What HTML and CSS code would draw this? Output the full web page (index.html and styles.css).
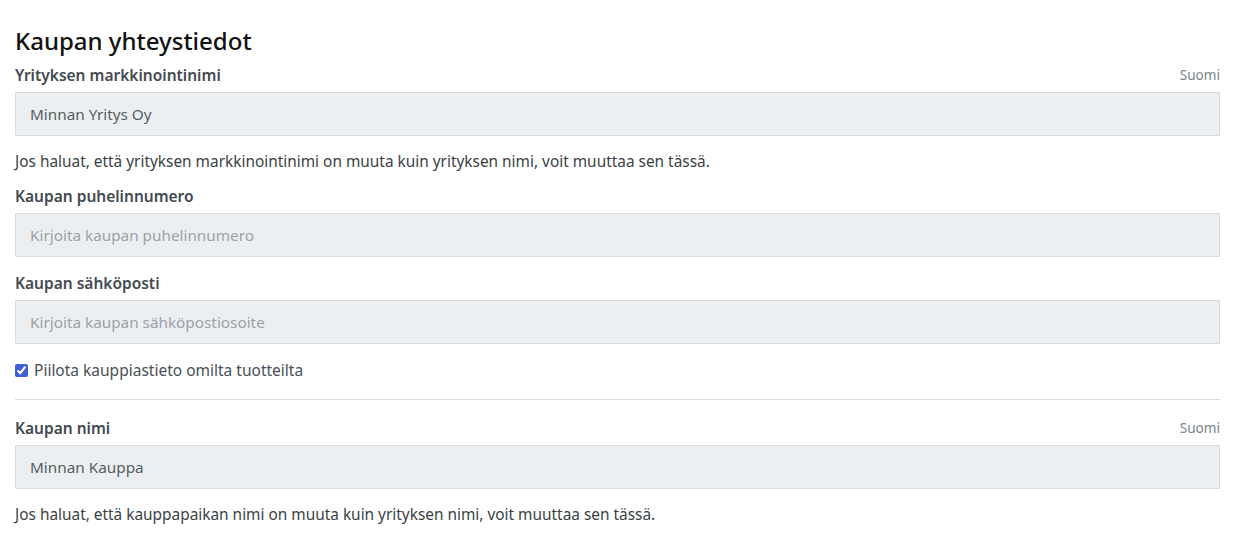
FILE: index.html
```html
<!DOCTYPE html>
<html lang="fi">
<head>
<meta charset="utf-8">
<title>Kaupan yhteystiedot</title>
<link rel="stylesheet" href="styles.css">
</head>
<body>
<main class="page">
  <h2 class="title">Kaupan yhteystiedot</h2>

  <div class="group">
    <div class="label-row">
      <label class="label" for="mname">Yrityksen markkinointinimi</label>
      <span class="lang">Suomi</span>
    </div>
    <input class="input" id="mname" type="text" value="Minnan Yritys Oy">
    <p class="help">Jos haluat, että yrityksen markkinointinimi on muuta kuin yrityksen nimi, voit muuttaa sen tässä.</p>
  </div>

  <div class="group">
    <div class="label-row">
      <label class="label" for="phone">Kaupan puhelinnumero</label>
    </div>
    <input class="input" id="phone" type="text" placeholder="Kirjoita kaupan puhelinnumero">
  </div>

  <div class="group">
    <div class="label-row">
      <label class="label" for="email">Kaupan sähköposti</label>
    </div>
    <input class="input" id="email" type="text" placeholder="Kirjoita kaupan sähköpostiosoite">
  </div>

  <label class="check">
    <input type="checkbox" checked>
    <span>Piilota kauppiastieto omilta tuotteilta</span>
  </label>

  <hr class="divider">

  <div class="group">
    <div class="label-row">
      <label class="label" for="sname">Kaupan nimi</label>
      <span class="lang">Suomi</span>
    </div>
    <input class="input" id="sname" type="text" value="Minnan Kauppa">
    <p class="help">Jos haluat, että kauppapaikan nimi on muuta kuin yrityksen nimi, voit muuttaa sen tässä.</p>
  </div>
</main>
</body>
</html>
```

FILE: styles.css
```css
* { box-sizing: border-box; }

html, body {
  margin: 0;
  background: #ffffff;
}

body {
  font-family: "Noto Sans", "Open Sans", "Liberation Sans", sans-serif;
  color: #3a3f45;
}

.page {
  padding: 26px 17px 0 15px;
  display: flex;
  flex-direction: column;
}

.title {
  margin: 0 0 8px 0;
  font-size: 24px;
  line-height: 30px;
  font-weight: 500;
  color: #111111;
}

.group {
  display: flex;
  flex-direction: column;
  margin-bottom: 15px;
}

.label-row {
  display: flex;
  justify-content: space-between;
  align-items: center;
  height: 22px;
  margin-bottom: 6px;
}

.label {
  font-size: 15.5px;
  font-weight: 600;
  line-height: 22px;
  color: #444a51;
}

.lang {
  font-size: 13.6px;
  line-height: 22px;
  color: #7b848b;
}

.input {
  height: 44px;
  width: 100%;
  margin: 0;
  padding: 0 14px;
  font-family: inherit;
  font-size: 15.3px;
  color: #575d63;
  background: #eceff1;
  border: 1px solid #d6dadd;
  border-radius: 1px;
  outline: none;
}

.input::placeholder {
  color: #9ba2a8;
  opacity: 1;
}

.help {
  margin: 15px 0 -3px 0;
  font-size: 15.4px;
  line-height: 22px;
  color: #3a3f45;
}

.check {
  display: flex;
  align-items: center;
  gap: 6px;
  height: 22px;
  font-size: 15.5px;
  color: #4a5057;
}

.check input {
  margin: 0;
  width: 13px;
  height: 13px;
  accent-color: #3f5fd8;
}

.divider {
  margin: 18px 0 17px 0;
  border: 0;
  border-top: 1px solid #d9dcdf;
}
```
